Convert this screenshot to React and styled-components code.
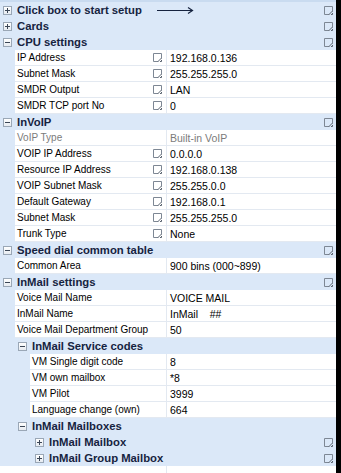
import React from "react";
import styled, { createGlobalStyle } from "styled-components";

const GlobalStyle = createGlobalStyle`
  html, body {
    margin: 0;
    padding: 0;
    background: #000;
  }
  body {
    font-family: "Liberation Sans", Arial, sans-serif;
  }
`;

const NAME_EDGE = 167;

const Frame = styled.div`
  width: 336px;
  height: 473px;
  overflow: hidden;
  background: #fff;
  display: flex;
  flex-direction: column;
`;

const Grid = styled.div`
  background: #dbe8f8;
  border-top: 2px solid #c9dbf0;
  display: flex;
  flex-direction: column;
`;

const HeaderRow = styled.div`
  height: 16px;
  display: flex;
  align-items: center;
  padding-left: ${(p) => p.$indent + 3}px;
  padding-right: 3px;
  box-sizing: border-box;
  color: #16233f;
  font-weight: bold;
  font-size: 11.3px;
`;

const HeaderText = styled.span`
  margin-left: 5px;
  white-space: nowrap;
`;

const Spacer = styled.div`
  flex: 1;
`;

const Toggle = styled.span`
  width: 7px;
  height: 7px;
  border: 1px solid #9aa7b6;
  background: linear-gradient(#ffffff, #e6ebf1);
  position: relative;
  flex: none;

  &::before,
  &::after {
    content: "";
    position: absolute;
    background: #3b4656;
  }
  &::before {
    left: 1px;
    right: 1px;
    top: 3px;
    height: 1px;
  }
  &::after {
    display: ${(p) => (p.$open ? "none" : "block")};
    top: 1px;
    bottom: 1px;
    left: 3px;
    width: 1px;
  }
`;

const Arrow = styled.svg`
  margin-left: 15px;
  flex: none;
`;

const PropRow = styled.div`
  height: 16px;
  display: flex;
  margin-left: ${(p) => p.$indent}px;
  background: #fff;
  border-bottom: 1px solid #e3e9f1;
  box-sizing: border-box;
  font-size: 10.5px;
  color: ${(p) => (p.$disabled ? "#7b7b7b" : "#000")};
`;

const NameCell = styled.div`
  width: ${(p) => NAME_EDGE - p.$indent}px;
  flex: none;
  display: flex;
  align-items: center;
  padding: 0 4px 0 2px;
  box-sizing: border-box;
  border-right: 1px solid #e3e9f1;
  white-space: nowrap;
  font-size: 10px;
`;

const ValueCell = styled.div`
  flex: 1;
  display: flex;
  align-items: center;
  padding-left: 3px;
  white-space: pre;
`;

const Filler = styled.div`
  flex: 1;
  display: flex;
  background: #fff;
`;

const FillerLeft = styled.div`
  width: ${NAME_EDGE}px;
  border-right: 1px solid #e3e9f1;
  box-sizing: border-box;
`;

const EditIcon = () => (
  <svg width="9" height="9" viewBox="0 0 9 9" style={{ flex: "none" }}>
    <path d="M0.5 8.5 V0.5 H8.5 V5.5" fill="none" stroke="#7d8794" />
    <path d="M0.5 8.5 H5.5" fill="none" stroke="#7d8794" />
    <path d="M5 8.5 L8.5 5" fill="none" stroke="#59626e" />
    <path d="M7 8.5 H8.5 V7" fill="none" stroke="#59626e" />
  </svg>
);

const Category = ({ title, indent = 0, open, edit, arrow, children }) => (
  <>
    <HeaderRow $indent={indent}>
      <Toggle $open={open} />
      <HeaderText>{title}</HeaderText>
      {arrow && (
        <Arrow width="37" height="8" viewBox="0 0 37 8">
          <path d="M0 4.5 H35" stroke="#16233f" strokeWidth="1.2" />
          <path d="M31 1.5 L35.5 4.5 L31 7.5" fill="none" stroke="#16233f" strokeWidth="1.2" />
        </Arrow>
      )}
      <Spacer />
      {edit && <EditIcon />}
    </HeaderRow>
    {open && children}
  </>
);

const Prop = ({ name, value, indent = 15, edit, disabled }) => (
  <PropRow $indent={indent} $disabled={disabled}>
    <NameCell $indent={indent}>
      {name}
      <Spacer />
      {edit && <EditIcon />}
    </NameCell>
    <ValueCell>{value}</ValueCell>
  </PropRow>
);

const cpu = [
  ["IP Address", "192.168.0.136"],
  ["Subnet Mask", "255.255.255.0"],
  ["SMDR Output", "LAN"],
  ["SMDR TCP port No", "0"],
];

const voip = [
  ["VOIP IP Address", "0.0.0.0"],
  ["Resource IP Address", "192.168.0.138"],
  ["VOIP Subnet Mask", "255.255.0.0"],
  ["Default Gateway", "192.168.0.1"],
  ["Subnet Mask", "255.255.255.0"],
  ["Trunk Type", "None"],
];

const inmail = [
  ["Voice Mail Name", "VOICE MAIL"],
  ["InMail Name", "InMail    ##"],
  ["Voice Mail Department Group", "50"],
];

const codes = [
  ["VM Single digit code", "8"],
  ["VM own mailbox", "*8"],
  ["VM Pilot", "3999"],
  ["Language change (own)", "664"],
];

export default function App() {
  return (
    <>
      <GlobalStyle />
      <Frame>
        <Grid>
          <Category title="Click box to start setup" edit arrow />
          <Category title="Cards" edit />
          <Category title="CPU settings" open edit>
            {cpu.map(([n, v]) => (
              <Prop key={n} name={n} value={v} edit />
            ))}
          </Category>
          <Category title="InVoIP" open edit>
            <Prop name="VoIP Type" value="Built-in VoIP" disabled />
            {voip.map(([n, v]) => (
              <Prop key={n} name={n} value={v} edit />
            ))}
          </Category>
          <Category title="Speed dial common table" open edit>
            <Prop name="Common Area" value="900 bins (000~899)" />
          </Category>
          <Category title="InMail settings" open edit>
            {inmail.map(([n, v]) => (
              <Prop key={n} name={n} value={v} />
            ))}
            <Category title="InMail Service codes" indent={15} open>
              {codes.map(([n, v]) => (
                <Prop key={n} name={n} value={v} indent={30} />
              ))}
            </Category>
            <Category title="InMail Mailboxes" indent={15} open>
              <Category title="InMail Mailbox" indent={32} edit />
              <Category title="InMail Group Mailbox" indent={32} edit />
            </Category>
          </Category>
        </Grid>
        <Filler>
          <FillerLeft />
        </Filler>
      </Frame>
    </>
  );
}
